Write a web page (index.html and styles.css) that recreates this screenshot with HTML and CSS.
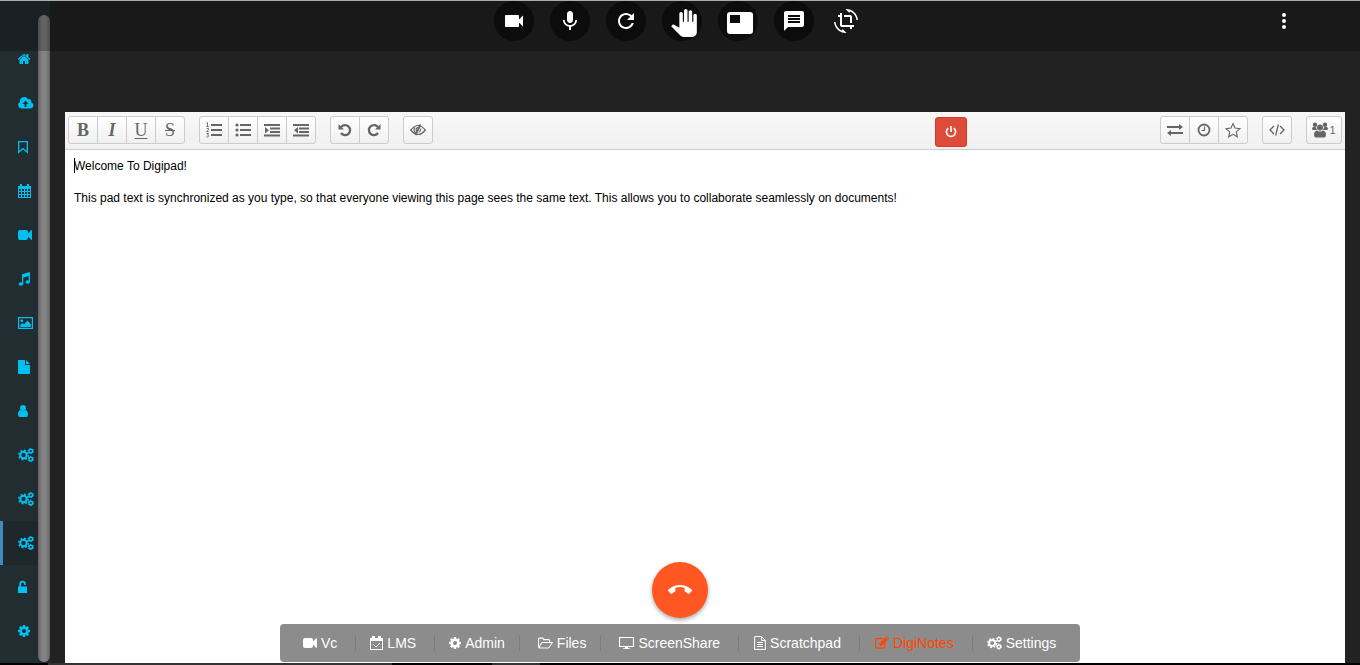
FILE: index.html
```html
<!DOCTYPE html>
<html lang="en">
<head>
<meta charset="utf-8">
<title>Digipad</title>
<meta name="viewport" content="width=device-width, initial-scale=1">
<link rel="stylesheet" href="styles.css">
</head>
<body>
<svg class="sprite" aria-hidden="true">
  <symbol id="cog" viewBox="0 0 1792 1792"><path d="M1152 896q0-106-75-181t-181-75-181 75-75 181 75 181 181 75 181-75 75-181zm512-109v222q0 12-8 23t-20 13l-185 28q-19 54-39 91 35 50 107 138 10 12 10 25t-9 23q-27 37-99 108t-94 71q-12 0-26-9l-138-108q-44 23-91 38-16 136-29 186-7 28-36 28h-222q-14 0-24.500-8.500t-11.500-21.500l-28-184q-49-16-90-37l-141 107q-10 9-25 9-14 0-25-11-126-114-165-168-7-10-7-23 0-12 8-23 15-21 51-66.500t54-70.500q-27-50-41-99l-183-27q-13-2-21-12.500t-8-23.500v-222q0-12 8-23t19-13l186-28q14-46 39-92-40-57-107-138-10-12-10-24 0-10 9-23 26-36 98.500-107.500t94.500-71.500q13 0 26 10l138 107q44-23 91-38 16-136 29-186 7-28 36-28h222q14 0 24.500 8.500t11.500 21.500l28 184q49 16 90 37l142-107q9-9 24-9 13 0 25 10 129 119 165 170 7 8 7 22 0 12-8 23-15 21-51 66.500t-54 70.500q26 50 41 98l183 28q13 2 21 12.500t8 23.500z"/></symbol>
  <symbol id="home" viewBox="0 0 1792 1792"><path d="M1472 992v480q0 26-19 45t-45 19h-384v-384h-256v384h-384q-26 0-45-19t-19-45v-480q0-1 .5-3t.5-3l575-474 575 474q1 2 1 6zm223-69l-62 74q-8 9-21 11h-3q-13 0-21-7l-692-577-692 577q-12 8-24 7-13-2-21-11l-62-74q-8-10-7-23.500t11-21.500l719-599q32-26 76-26t76 26l244 204v-195q0-14 9-23t23-9h192q14 0 23 9t9 23v408l219 182q10 8 11 21.500t-7 23.500z"/></symbol>
  <symbol id="cogs" viewBox="0 0 16 14">
    <g fill="none" stroke="currentColor">
      <circle cx="5.500" cy="7" r="3.200" stroke-width="2"/><circle cx="5.500" cy="7" r="4.700" stroke-width="1.600" stroke-dasharray="1.850 1.841"/>
      <circle cx="12.800" cy="3" r="1.800" stroke-width="1.500"/><circle cx="12.800" cy="3" r="2.700" stroke-width="1" stroke-dasharray="1.400 1.427"/>
      <circle cx="12.800" cy="11" r="1.800" stroke-width="1.500"/><circle cx="12.800" cy="11" r="2.700" stroke-width="1" stroke-dasharray="1.400 1.427"/>
    </g>
  </symbol>
  <symbol id="cloud" viewBox="0 0 16 14"><path fill-rule="evenodd" d="M3.500 12.500A3.500 3.500 0 0 1 2 5.900 4.300 4.300 0 0 1 10 3.300a2.500 2.500 0 0 1 3.200 3.300 3 3 0 0 1-.7 5.900zM7.500 4.500 4.500 8H6.500v3h2V8h2z"/></symbol>
  <symbol id="bookmark" viewBox="0 0 10 14"><path d="M.7 1.700h8.600v10.600L5 8.600.7 12.300z" fill="none" stroke="currentColor" stroke-width="1.300"/></symbol>
  <symbol id="calendar" viewBox="0 0 13 14"><path fill-rule="evenodd" d="M0 2h2V0h2v2h5V0h2v2h2v12H0zM1 5v2h2V5zm3 0v2h2V5zm3 0v2h2V5zm3 0v2h2V5zM1 8v2h2V8zm3 0v2h2V8zm3 0v2h2V8zm3 0v2h2V8zM1 11v2h2v-2zm3 0v2h2v-2zm3 0v2h2v-2zm3 0v2h2v-2z"/></symbol>
  <symbol id="camera" viewBox="0 0 14 14"><path d="M2 2h6a2 2 0 0 1 2 2v1.500L13 2.300h1v9.400h-1L10 8.500V10a2 2 0 0 1-2 2H2a2 2 0 0 1-2-2V4a2 2 0 0 1 2-2z"/></symbol>
  <symbol id="music" viewBox="0 0 12 14"><path d="M4 2.300 12 0v10a2.200 1.700 0 1 1-1.300-1.600V4L5.300 5.600V12A2.300 1.700 0 1 1 4 10.400z"/></symbol>
  <symbol id="image" viewBox="0 0 15 14"><path fill-rule="evenodd" d="M0 1h15v12H0zM1.200 2.200v9.600h12.600V2.200z"/><circle cx="3.800" cy="4.800" r="1.400"/><path d="M2.300 11V9l2-2L6 8.500 9.300 4.500l3.500 3.500v3z"/></symbol>
  <symbol id="file" viewBox="0 0 12 14"><path d="M0 0h7v5h5v9H0zM8 0l4 4H8z"/></symbol>
  <symbol id="user" viewBox="0 0 10 14"><circle cx="5" cy="4" r="3"/><path d="M2.500 6Q0 6.500 0 10.500 0 13 2 13h6q2 0 2-2.500Q10 6.500 7.500 6 5 8.500 2.500 6z"/></symbol>
  <symbol id="unlock" viewBox="0 0 10 14"><path d="M0 6.500h1.300V4a3.300 3.300 0 0 1 6.600 0v1H6.200V4A1.600 1.600 0 0 0 3 4v2.500h6V13H0z"/></symbol>
  <symbol id="calcheck" viewBox="0 0 13 14"><path fill-rule="evenodd" d="M0 2h2V0h3v2h3V0h3v2h2v12H0zM1 5v8h11V5z"/><path d="M3.500 8.500 6 11l4-4" fill="none" stroke="currentColor"/></symbol>
  <symbol id="folder" viewBox="0 0 16 14"><path d="M.6 11.500V3q0-1.200 1.200-1.200H5L6.300 3.400h5q1.200 0 1.200 1.200v1.800M.8 12l3-5q.4-.6 1-.6h10.400L12 11.500q-.5.800-1.300.8H1.600Q.6 12.300.6 11" fill="none" stroke="currentColor" stroke-width="1.100"/></symbol>
  <symbol id="screen" viewBox="0 0 15 14"><path fill-rule="evenodd" d="M0 1h15v10H9v1.200h2V13H4v-.8h2V11H0zm1.100 1v8h12.800V2z"/></symbol>
  <symbol id="filetext" viewBox="0 0 12 14"><path d="M.6.600h6.900l3.900 3.900v8.900H.600zM7.500.600v4h4M3 6.500h6M3 8.500h6M3 10.500h6" fill="none" stroke="currentColor"/></symbol>
  <symbol id="edit" viewBox="0 0 14 14"><path d="M10 8v2.500q0 1.700-1.700 1.700h-6Q.6 12.200.6 10.500v-6.200q0-1.700 1.700-1.700H8" fill="none" stroke="currentColor" stroke-width="1.200"/><path d="m4.500 7.200 6-6L13 3.700l-6 6H4.500zM11 .700q.7-.7 1.400 0l1.200 1.200q.5.700-.2 1.300z"/></symbol>
  <symbol id="ol" viewBox="0 0 16 16"><path d="M5 2h11v2H5zm0 5h11v2H5zm0 5h11v2H5z"/><path d="M.5 1 1.500.500V4M.3 4.500h2.500M.5 6.500h2v1.300L.5 9.600h2.300M.5 11.500h2L1.500 13q1.300.200 1.200 1.200-.5 1.300-2.200.5" fill="none" stroke="currentColor" stroke-width=".9"/></symbol>
  <symbol id="ul" viewBox="0 0 16 16"><path d="M5 2h11v2H5zm0 5h11v2H5zm0 5h11v2H5z"/><circle cx="2" cy="3" r="1.600"/><circle cx="2" cy="8" r="1.600"/><circle cx="2" cy="13" r="1.600"/></symbol>
  <symbol id="indent" viewBox="0 0 16 16"><path d="M0 2h16v2H0zm6 3.500h10v2H6zm0 3.500h10v2H6zm-6 3.500h16v2H0zM1 5l4 3.200-4 3.300z"/></symbol>
  <symbol id="outdent" viewBox="0 0 16 16"><path d="M0 2h16v2H0zm6 3.500h10v2H6zm0 3.500h10v2H6zm-6 3.500h16v2H0zM5 5 1 8.200l4 3.300z"/></symbol>
  <symbol id="undo" viewBox="0 0 14 14"><path d="M3 4.200A5 5 0 1 1 3 10" fill="none" stroke="currentColor" stroke-width="2.300"/><path d="M.5 1v5.500H6z"/></symbol>
  <symbol id="redo" viewBox="0 0 14 14"><path d="M11 4.200A5 5 0 1 0 11 10" fill="none" stroke="currentColor" stroke-width="2.300"/><path d="M13.500 1v5.500H8z"/></symbol>
  <symbol id="eyeslash" viewBox="0 0 16 14"><path d="M.7 7Q8-2 15.300 7 8 16 .7 7zM5 4.500a3.500 3.500 0 0 0 1 5.500M8 4.300a2.600 2.600 0 0 0-1.500 3.700" fill="none" stroke="currentColor" stroke-width="1.200"/><path d="M10.500 1.500 5.500 12" stroke="currentColor" stroke-width="1.800"/><path d="M11 4.500Q12 8 8.500 10z"/></symbol>
  <symbol id="power" viewBox="0 0 12 14"><path d="M3.200 3.200a4.600 4.600 0 1 0 5.600 0" fill="none" stroke="currentColor" stroke-width="1.700"/><path d="M5.200 1h1.600v6H5.200z"/></symbol>
  <symbol id="swap" viewBox="0 0 16 14"><path d="M0 3h12V1l4 3-4 3V5H0zm16 8H4v2L0 10l4-3v2h12z"/></symbol>
  <symbol id="clock" viewBox="0 0 14 14"><circle cx="7" cy="7" r="5.500" fill="none" stroke="currentColor" stroke-width="1.800"/><path d="M7.500 3.500v4h-3" fill="none" stroke="currentColor" stroke-width="1.200"/></symbol>
  <symbol id="star" viewBox="0 0 16 16"><path d="m8 1.500 2 4.500 5 .6-3.700 3.300 1 4.900L8 12.300l-4.300 2.500 1-4.900L1 6.600 6 6z" fill="none" stroke="currentColor" stroke-width="1.100"/></symbol>
  <symbol id="code" viewBox="0 0 16 14"><path d="M5 3 1 7l4 4M11 3l4 4-4 4M9.300 1.500l-2.600 11" fill="none" stroke="currentColor" stroke-width="1.300"/></symbol>
  <symbol id="users" viewBox="0 0 16 16"><circle cx="3" cy="2.700" r="2.200"/><circle cx="13" cy="2.700" r="2.200"/><circle cx="8" cy="5.500" r="3"/><path d="M1.500 5H4q.3 2 1.200 3H1.500Q0 8 0 7q0-2 1.500-2zM14.500 5H12q-.3 2-1.200 3h3.700Q16 8 16 7q0-2-1.500-2zM5 8.500Q8 10.500 11 8.500q3 .5 3 4.500 0 2.500-2 2.500H4q-2 0-2-2.500 0-4 3-4.500z"/></symbol>
  <symbol id="videocam" viewBox="0 0 24 24"><path d="M17 10.500V7c0-.550-.450-1-1-1H4c-.550 0-1 .450-1 1v10c0 .550.450 1 1 1h12c.550 0 1-.450 1-1v-3.500l4 4v-11l-4 4z"/></symbol>
  <symbol id="mic" viewBox="0 0 24 24"><path d="M12 14c1.660 0 2.990-1.340 2.990-3L15 5c0-1.660-1.340-3-3-3S9 3.340 9 5v6c0 1.660 1.340 3 3 3zm5.300-3c0 3-2.540 5.100-5.300 5.100S6.700 14 6.700 11H5c0 3.410 2.720 6.230 6 6.720V21h2v-3.280c3.280-.480 6-3.300 6-6.720h-1.700z"/></symbol>
  <symbol id="refresh" viewBox="0 0 24 24"><path d="M17.650 6.350C16.200 4.900 14.210 4 12 4c-4.420 0-7.990 3.580-7.990 8s3.570 8 7.990 8c3.730 0 6.840-2.550 7.730-6h-2.080c-.820 2.330-3.040 4-5.650 4-3.310 0-6-2.690-6-6s2.690-6 6-6c1.660 0 3.140.690 4.220 1.780L13 11h7V4l-2.350 2.350z"/></symbol>
  <symbol id="hand" viewBox="0 0 24 24"><path d="M23 5.500V20c0 2.200-1.800 4-4 4h-7.300c-1.080 0-2.100-.430-2.850-1.190L1 14.830s1.260-1.230 1.300-1.250c.220-.190.490-.290.790-.290.220 0 .420.060.600.160.040.010 4.310 2.460 4.310 2.460V4c0-.830.670-1.500 1.500-1.500S11 3.170 11 4v7h1V1.500c0-.830.670-1.500 1.500-1.500S15 .670 15 1.500V11h1V2.500c0-.830.670-1.500 1.500-1.500s1.500.670 1.500 1.500V11h1V5.500c0-.830.670-1.500 1.500-1.500s1.500.670 1.500 1.500z"/></symbol>
  <symbol id="pip" viewBox="0 0 28 28"><path fill-rule="evenodd" d="M4 3h20a3 3 0 0 1 3 3v16a3 3 0 0 1-3 3H4a3 3 0 0 1-3-3V6a3 3 0 0 1 3-3zm0 3v8h10V6z"/></symbol>
  <symbol id="chat" viewBox="0 0 24 24"><path d="M20 2H4c-1.100 0-1.990.900-1.990 2L2 22l4-4h14c1.100 0 2-.900 2-2V4c0-1.100-.900-2-2-2zm-2 12H6v-2h12v2zm0-3H6V9h12v2zm0-3H6V6h12v2z"/></symbol>
  <symbol id="rotate" viewBox="0 0 24 24"><path d="M7.470 21.490C4.200 19.930 1.860 16.760 1.500 13H0c.510 6.160 5.660 11 11.950 11 .230 0 .440-.020.660-.030L8.800 20.150l-1.330 1.340zM12.050 0c-.230 0-.440.020-.660.040l3.810 3.810 1.330-1.330C19.800 4.070 22.140 7.240 22.500 11H24c-.510-6.160-5.660-11-11.950-11zM16 14h2V8c0-1.110-.900-2-2-2h-6v2h6v6zm-8 2V4H6v2H4v2h2v8c0 1.100.890 2 2 2h8v2h2v-2h2v-2H8z"/></symbol>
  <symbol id="more" viewBox="0 0 24 24"><circle cx="12" cy="6" r="2"/><circle cx="12" cy="12" r="2"/><circle cx="12" cy="18" r="2"/></symbol>
  <symbol id="hangup" viewBox="0 0 24 24"><path d="M12 9c-1.600 0-3.150.250-4.600.720v3.100c0 .390-.230.740-.560.900-.980.490-1.870 1.120-2.660 1.850-.180.180-.430.280-.700.280-.280 0-.530-.110-.710-.290L.290 13.080c-.180-.170-.290-.420-.290-.700 0-.280.110-.530.290-.710C3.340 8.780 7.460 7 12 7s8.660 1.780 11.710 4.670c.180.180.290.430.290.710 0 .280-.110.530-.290.710l-2.480 2.480c-.180.180-.430.290-.710.290-.270 0-.520-.110-.700-.280-.790-.740-1.690-1.360-2.670-1.850-.330-.160-.560-.500-.560-.900v-3.100C15.150 9.250 13.600 9 12 9z"/></symbol>
</svg>

<div class="app">
  <nav class="sidebar" aria-label="Main">
    <a class="side-link" href="#home" aria-label="Home"><svg class="i14 outset"><use href="#home"/></svg></a>
    <a class="side-link" href="#upload" aria-label="Upload"><svg class="i16"><use href="#cloud"/></svg></a>
    <a class="side-link" href="#bookmarks" aria-label="Bookmarks"><svg class="i10"><use href="#bookmark"/></svg></a>
    <a class="side-link" href="#calendar-page" aria-label="Calendar"><svg class="i13"><use href="#calendar"/></svg></a>
    <a class="side-link" href="#video" aria-label="Video"><svg class="i14"><use href="#camera"/></svg></a>
    <a class="side-link" href="#audio" aria-label="Audio"><svg class="i12"><use href="#music"/></svg></a>
    <a class="side-link" href="#images" aria-label="Images"><svg class="i15"><use href="#image"/></svg></a>
    <a class="side-link" href="#files" aria-label="Files"><svg class="i12"><use href="#file"/></svg></a>
    <a class="side-link" href="#profile" aria-label="Profile"><svg class="i10"><use href="#user"/></svg></a>
    <a class="side-link" href="#tools" aria-label="Tools"><svg class="i16"><use href="#cogs"/></svg></a>
    <a class="side-link" href="#services" aria-label="Services"><svg class="i16"><use href="#cogs"/></svg></a>
    <a class="side-link is-active" href="#meeting" aria-label="Meeting"><svg class="i16"><use href="#cogs"/></svg></a>
    <a class="side-link" href="#access" aria-label="Access"><svg class="i10"><use href="#unlock"/></svg></a>
    <a class="side-link" href="#settings" aria-label="Settings"><svg class="i14 outset"><use href="#cog"/></svg></a>
  </nav>
  <div class="track"><div class="thumb"></div></div>

  <main class="pad">
    <div class="toolbar">
      <div class="group">
        <button class="tool letter bold" aria-label="Bold">B</button>
        <button class="tool letter italic" aria-label="Italic">I</button>
        <button class="tool letter underline" aria-label="Underline">U</button>
        <button class="tool letter strike" aria-label="Strikethrough">S</button>
      </div>
      <div class="group">
        <button class="tool" aria-label="Ordered list"><svg class="s16"><use href="#ol"/></svg></button>
        <button class="tool" aria-label="Unordered list"><svg class="s16"><use href="#ul"/></svg></button>
        <button class="tool" aria-label="Indent"><svg class="s16"><use href="#indent"/></svg></button>
        <button class="tool" aria-label="Outdent"><svg class="s16"><use href="#outdent"/></svg></button>
      </div>
      <div class="group">
        <button class="tool" aria-label="Undo"><svg class="s14"><use href="#undo"/></svg></button>
        <button class="tool" aria-label="Redo"><svg class="s14"><use href="#redo"/></svg></button>
      </div>
      <div class="group">
        <button class="tool" aria-label="Clear authorship"><svg class="i16"><use href="#eyeslash"/></svg></button>
      </div>
      <div class="fill-left"></div>
      <button class="power" aria-label="Close pad"><svg class="i12"><use href="#power"/></svg></button>
      <div class="fill-right"></div>
      <div class="group">
        <button class="tool" aria-label="Import and export"><svg class="i16"><use href="#swap"/></svg></button>
        <button class="tool" aria-label="History"><svg class="s14"><use href="#clock"/></svg></button>
        <button class="tool" aria-label="Save revision"><svg class="s16"><use href="#star"/></svg></button>
      </div>
      <div class="group">
        <button class="tool" aria-label="Embed"><svg class="i16"><use href="#code"/></svg></button>
      </div>
      <div class="group">
        <button class="tool people" aria-label="1 user"><svg class="s16"><use href="#users"/></svg>1</button>
      </div>
    </div>
    <div class="editor">
      <span class="caret"></span>
      <textarea class="text" aria-label="Pad text" spellcheck="false">Welcome To Digipad!

This pad text is synchronized as you type, so that everyone viewing this page sees the same text. This allows you to collaborate seamlessly on documents!</textarea>
    </div>
  </main>
</div>

<div class="bottom-edge"></div>

<header class="callbar">
  <div class="controls">
    <button class="round" aria-label="Camera"><svg class="s24"><use href="#videocam"/></svg></button>
    <button class="round" aria-label="Microphone"><svg class="s24"><use href="#mic"/></svg></button>
    <button class="round" aria-label="Refresh"><svg class="s24"><use href="#refresh"/></svg></button>
    <button class="round large" aria-label="Raise hand"><svg class="s28"><use href="#hand"/></svg></button>
    <button class="round large" aria-label="Picture in picture"><svg class="s28"><use href="#pip"/></svg></button>
    <button class="round" aria-label="Chat"><svg class="s24"><use href="#chat"/></svg></button>
    <button class="plain" aria-label="Rotate"><svg class="s24"><use href="#rotate"/></svg></button>
  </div>
  <button class="more" aria-label="More options"><svg class="s24"><use href="#more"/></svg></button>
</header>

<div class="overlay">
  <button class="hangup" aria-label="End call"><svg class="s24"><use href="#hangup"/></svg></button>
  <nav class="dock" aria-label="Tools">
    <a class="dock-link" href="#vc"><svg class="i14"><use href="#camera"/></svg>Vc</a>
    <a class="dock-link near" href="#lms"><svg class="i13"><use href="#calcheck"/></svg>LMS</a>
    <a class="dock-link near tight" href="#admin"><svg class="s14 dock-cog"><use href="#cog"/></svg>Admin</a>
    <a class="dock-link wide tight" href="#files"><svg class="i15"><use href="#folder"/></svg>Files</a>
    <a class="dock-link wide" href="#share"><svg class="i15"><use href="#screen"/></svg>ScreenShare</a>
    <a class="dock-link" href="#scratch"><svg class="i12"><use href="#filetext"/></svg>Scratchpad</a>
    <a class="dock-link is-current" href="#notes"><svg class="i14"><use href="#edit"/></svg>DigiNotes</a>
    <a class="dock-link near" href="#settings"><svg class="i15"><use href="#cogs"/></svg>Settings</a>
  </nav>
</div>
</body>
</html>
```
FILE: styles.css
```css
* { box-sizing: border-box; }

body {
  margin: 0;
  height: 100vh;
  display: flex;
  flex-direction: column;
  position: relative;
  overflow: hidden;
  background: #222;
  font-family: "Liberation Sans", Arial, sans-serif;
}

button {
  margin: 0;
  padding: 0;
  border: 0;
  background: none;
  color: inherit;
  font: inherit;
  cursor: pointer;
}

a { text-decoration: none; }
svg { fill: currentColor; flex: none; display: block; }

.sprite { position: absolute; width: 0; height: 0; }

.i10 { width: 10px; height: 14px; }
.i12 { width: 12px; height: 14px; }
.i13 { width: 13px; height: 14px; }
.i14, .s14 { width: 14px; height: 14px; }
.i15 { width: 15px; height: 14px; }
.i16 { width: 16px; height: 14px; }
.s16 { width: 16px; height: 16px; }
.s24 { width: 24px; height: 24px; }
.s28 { width: 28px; height: 28px; }

.app { flex: 1; min-height: 0; display: flex; }

.sidebar {
  width: 38px;
  padding-top: 37px;
  background: #222d32;
  overflow: hidden;
}

.side-link {
  height: 44px;
  padding-left: 15px;
  border-left: 3px solid transparent;
  display: flex;
  align-items: center;
  color: #00c0ef;
}

.side-link.is-active { background: #1e282c; border-left-color: #3c8dbc; }
.outset { margin-left: -1px; }

.track {
  width: 12px;
  padding: 15px 0 1px;
  display: flex;
  background: #222d32;
}

.thumb {
  flex: 1;
  border-radius: 6px;
  background: linear-gradient(to right, #646464, #848484 35%, #848484 65%, #646464);
}

.pad {
  flex: 1;
  min-width: 0;
  margin: 112px 15px 0;
  display: flex;
  flex-direction: column;
  background: #fff;
}

.toolbar {
  height: 38px;
  padding: 4px 3px 0;
  display: flex;
  align-items: flex-start;
  border-bottom: 1px solid #ccc;
  background: linear-gradient(#f7f7f7, #f0f0f0);
}

.group {
  height: 28px;
  display: flex;
  border: 1px solid #ccc;
  border-radius: 3px;
  background: linear-gradient(#fff, #f0f0f0);
}

.group + .group { margin-left: 14px; }

.tool {
  width: 28px;
  display: flex;
  align-items: center;
  justify-content: center;
  color: #666;
}

.tool + .tool { width: 29px; border-left: 1px solid #ccc; }
.tool.people { width: 34px; gap: 1px; font-size: 11px; }

.letter { font-family: "Liberation Serif", "Times New Roman", serif; font-size: 18px; line-height: 20px; }
.bold, .italic { font-weight: bold; }
.italic { font-style: italic; }
.underline { text-decoration: underline; text-underline-offset: 2px; }
.strike { text-decoration: line-through; }

.fill-left { flex: 13; }
.fill-right { flex: 5; }

.power {
  width: 32px;
  height: 30px;
  margin-top: 1px;
  display: flex;
  align-items: center;
  justify-content: center;
  border: 1px solid #d73925;
  border-radius: 3px;
  background: #dd4b39;
  color: #fff;
}

.editor { flex: 1; position: relative; display: flex; }

.caret {
  position: absolute;
  left: 9px;
  top: 8px;
  width: 1px;
  height: 15px;
  background: #000;
}

.text {
  flex: 1;
  padding: 8px 9px;
  border: 0;
  outline: 0;
  resize: none;
  background: none;
  color: #000;
  font-family: "Liberation Sans", Arial, sans-serif;
  font-size: 12px;
  line-height: 16px;
}

.bottom-edge {
  height: 2px;
  background: linear-gradient(to right, #000 48px, #333 48px, #333 392px, #000 392px, #000 492px, #333 492px, #333 540px, #000 540px);
}

.callbar {
  position: absolute;
  inset: 0 0 auto;
  height: 51px;
  border-top: 1px solid #a9adac;
  background: rgba(0, 0, 0, .25);
  color: #fff;
}

.controls { display: flex; justify-content: center; gap: 16px; }

.round, .plain {
  width: 40px;
  height: 40px;
  display: flex;
  align-items: center;
  justify-content: center;
}

.round { border-radius: 50%; background: #0c0c0c; }
.round.large { padding: 4px 0 0 4px; }
.plain { width: 32px; margin-right: 4px; }

.more { position: absolute; top: 8px; right: 64px; }

.overlay {
  position: absolute;
  left: 0;
  right: 0;
  bottom: 3px;
  display: flex;
  flex-direction: column;
  align-items: center;
  gap: 6px;
}

.hangup {
  width: 56px;
  height: 56px;
  display: flex;
  align-items: center;
  justify-content: center;
  border-radius: 50%;
  background: #ff5722;
  color: #fff;
  box-shadow: 0 2px 4px rgba(0, 0, 0, .35);
}

.dock {
  width: 800px;
  max-width: 100%;
  height: 38px;
  padding-left: 8px;
  display: flex;
  align-items: center;
  border-radius: 4px;
  background: #8c8c8c;
}

.dock-link {
  height: 16px;
  padding: 0 18px 0 15px;
  display: flex;
  align-items: center;
  gap: 4px;
  border-right: 1px solid #7d7d7d;
  color: #fff;
  font-size: 14px;
  line-height: 16px;
}

.dock-link.near { padding-left: 14px; }
.dock-link.tight { padding-right: 14px; }
.dock-link.wide { padding-left: 18px; }
.dock-link.is-current { color: #ff4500; }
.dock-link:last-child { border-right: 0; }
.dock-cog { margin: 0 -1px; }
```
